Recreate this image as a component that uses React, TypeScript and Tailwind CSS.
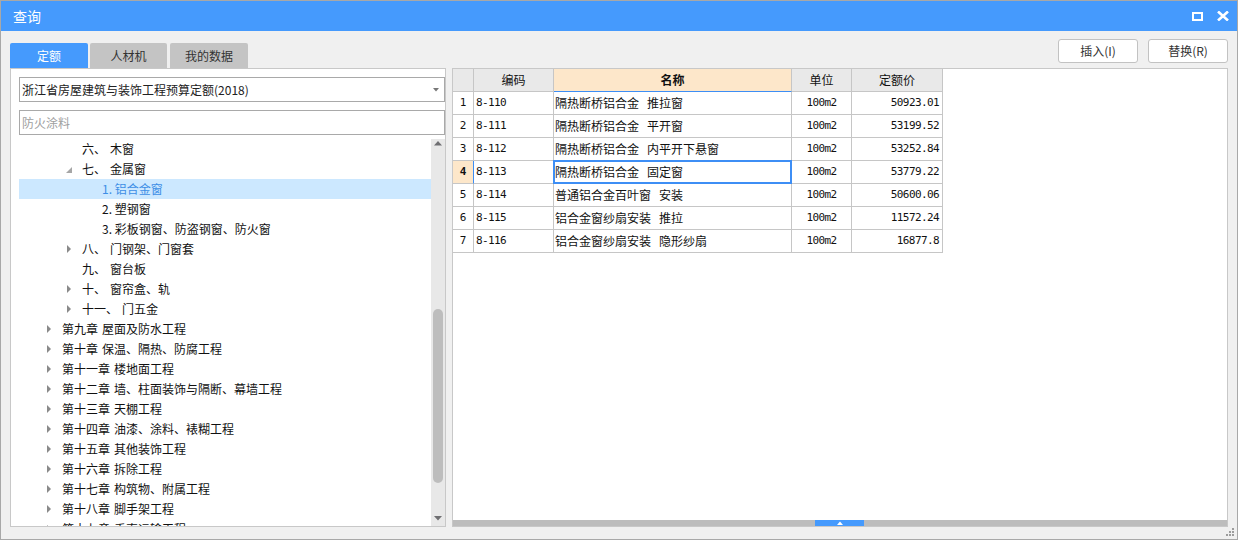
import React from "react";

const CJK = { fontFamily: '"Noto Sans CJK SC", "Noto Sans", sans-serif' };
const MONO = { fontFamily: '"DejaVu Sans Mono", "Liberation Mono", monospace' };

type Node = { level: number; arrow?: "open" | "closed"; prefix?: string; label: string; selected?: boolean };

const tree: Node[] = [
  { level: 1, prefix: "六、", label: "木窗" },
  { level: 1, arrow: "open", prefix: "七、", label: "金属窗" },
  { level: 2, label: "1. 铝合金窗", selected: true },
  { level: 2, label: "2. 塑钢窗" },
  { level: 2, label: "3. 彩板钢窗、防盗钢窗、防火窗" },
  { level: 1, arrow: "closed", prefix: "八、", label: "门钢架、门窗套" },
  { level: 1, prefix: "九、", label: "窗台板" },
  { level: 1, arrow: "closed", prefix: "十、", label: "窗帘盒、轨" },
  { level: 1, arrow: "closed", prefix: "十一、", label: "门五金" },
  { level: 0, arrow: "closed", prefix: "第九章", label: "屋面及防水工程" },
  { level: 0, arrow: "closed", prefix: "第十章", label: "保温、隔热、防腐工程" },
  { level: 0, arrow: "closed", prefix: "第十一章", label: "楼地面工程" },
  { level: 0, arrow: "closed", prefix: "第十二章", label: "墙、柱面装饰与隔断、幕墙工程" },
  { level: 0, arrow: "closed", prefix: "第十三章", label: "天棚工程" },
  { level: 0, arrow: "closed", prefix: "第十四章", label: "油漆、涂料、裱糊工程" },
  { level: 0, arrow: "closed", prefix: "第十五章", label: "其他装饰工程" },
  { level: 0, arrow: "closed", prefix: "第十六章", label: "拆除工程" },
  { level: 0, arrow: "closed", prefix: "第十七章", label: "构筑物、附属工程" },
  { level: 0, arrow: "closed", prefix: "第十八章", label: "脚手架工程" },
  { level: 0, arrow: "closed", prefix: "第十九章", label: "垂直运输工程" },
];

const rows = [
  ["8-110", "隔热断桥铝合金", "推拉窗", "50923.01"],
  ["8-111", "隔热断桥铝合金", "平开窗", "53199.52"],
  ["8-112", "隔热断桥铝合金", "内平开下悬窗", "53252.84"],
  ["8-113", "隔热断桥铝合金", "固定窗", "53779.22"],
  ["8-114", "普通铝合金百叶窗", "安装", "50600.06"],
  ["8-115", "铝合金窗纱扇安装", "推拉", "11572.24"],
  ["8-116", "铝合金窗纱扇安装", "隐形纱扇", "16877.8"],
];

function Arrow({ kind }: { kind?: "open" | "closed" }) {
  return (
    <div className="w-[16px] h-[20px] flex items-center shrink-0">
      {kind === "closed" && (
        <svg width="5" height="8" viewBox="0 0 5 8" className="ml-[1px]">
          <polygon points="0,0 4,4 0,8" fill="#8a8a8a" />
        </svg>
      )}
      {kind === "open" && (
        <svg width="7" height="7" viewBox="0 0 7 7" className="mt-[3px]">
          <polygon points="6,0 6,6 0,6" fill="#a6a6a6" />
        </svg>
      )}
    </div>
  );
}

function TreeRow({ n }: { n: Node }) {
  const pad = n.level === 0 ? "pl-[27px]" : n.level === 1 ? "pl-[47px]" : "pl-[67px]";
  return (
    <div
      className={`h-[20px] flex items-center shrink-0 whitespace-nowrap text-[12px] leading-[20px] ${pad} ${
        n.selected ? "bg-[#cce8ff] text-[#3d8ee6]" : "text-[#111]"
      }`}
    >
      <Arrow kind={n.arrow} />
      {n.prefix && <span>{n.prefix}</span>}
      <span className={n.prefix ? "ml-[4px]" : ""}>{n.label}</span>
    </div>
  );
}

export default function App() {
  return (
    <div
      className="w-[1238px] h-[540px] border border-[#a8a8a8] bg-[#f0f0f0] flex flex-col relative overflow-hidden"
      style={CJK}
    >
      {/* title bar */}
      <div className="h-[30px] bg-[#459afd] flex items-center justify-between pl-[12px] pr-[8px] shrink-0">
        <span className="text-white text-[14px] leading-[20px]">查询</span>
        <div className="flex items-center gap-[14px]">
          <svg width="11" height="9" viewBox="0 0 11 9">
            <rect x="1" y="1" width="9" height="7" fill="none" stroke="#fff" strokeWidth="2" />
          </svg>
          <svg width="12" height="10" viewBox="0 0 12 10">
            <path d="M1 0.5 L11 9.5 M11 0.5 L1 9.5" stroke="#fff" strokeWidth="2.6" />
          </svg>
        </div>
      </div>

      {/* body */}
      <div className="flex-1 grid grid-cols-[436px_1fr] grid-rows-[29px_1fr] gap-x-[6px] pl-[9px] pr-[9px] pt-[8px] pb-[12px] min-h-0">
        {/* tabs */}
        <div className="flex items-end text-[12px]">
          <div className="w-[78px] h-[25px] rounded-t-[2px] bg-[#459afd] text-white flex items-center justify-center">
            定额
          </div>
          <div className="w-[77px] h-[25px] ml-[2px] rounded-t-[2px] bg-[#c4c4c4] text-[#333] flex items-center justify-center">
            人材机
          </div>
          <div className="w-[78px] h-[25px] ml-[3px] rounded-t-[2px] bg-[#c4c4c4] text-[#333] flex items-center justify-center">
            我的数据
          </div>
        </div>

        {/* buttons */}
        <div className="flex justify-end items-start gap-[10px] text-[12px] text-[#333]">
          <button className="w-[80px] h-[24px] bg-white border border-[#c2c2c2] rounded-[3px] flex items-center justify-center">
            插入(I)
          </button>
          <button className="w-[80px] h-[24px] bg-white border border-[#c2c2c2] rounded-[3px] flex items-center justify-center">
            替换(R)
          </button>
        </div>

        {/* left panel */}
        <div className="border border-[#c8c8c8] bg-white flex flex-col min-h-0">
          <div className="ml-[8px] mt-[8px] h-[25px] border border-[#a9a9a9] flex items-center justify-between pl-[2px] pr-[5px] text-[12px] text-[#222] shrink-0">
            <span>浙江省房屋建筑与装饰工程预算定额(2018)</span>
            <svg width="6" height="4" viewBox="0 0 6 4">
              <polygon points="0,0 6,0 3,3.5" fill="#777" />
            </svg>
          </div>
          <div className="ml-[8px] mt-[8px] h-[25px] border border-[#a9a9a9] flex items-center pl-[2px] text-[12px] text-[#a0a0a0] shrink-0">
            防火涂料
          </div>
          <div className="mt-[4px] flex-1 flex pl-[8px] min-h-0">
            <div className="flex-1 flex flex-col overflow-hidden">
              {tree.map((n, i) => (
                <TreeRow key={i} n={n} />
              ))}
            </div>
            <div className="w-[14px] bg-[#e8e8e8] relative shrink-0">
              <svg width="8" height="5" viewBox="0 0 8 5" className="absolute left-[3px] top-[2px]">
                <polygon points="0,4.5 8,4.5 4,0" fill="#6f6f72" />
              </svg>
              <div className="absolute left-[2px] w-[10px] top-[170px] h-[174px] rounded-[5px] bg-[#bdbdbd]" />
              <svg width="8" height="5" viewBox="0 0 8 5" className="absolute left-[3px] bottom-[5px]">
                <polygon points="0,0 8,0 4,4.5" fill="#6f6f72" />
              </svg>
            </div>
          </div>
        </div>

        {/* right panel */}
        <div className="border border-[#c8c8c8] bg-white flex flex-col min-h-0">
          <div className="grid grid-cols-[21px_80px_238px_60px_91px] auto-rows-[23px] w-max text-[12px] text-[#111]">
            <div className="bg-[#e9e9e9] border-r border-b border-[#c6c6c6]" />
            <div className="bg-[#e9e9e9] border-r border-b border-[#c6c6c6] flex items-center justify-center">编码</div>
            <div className="bg-[#fde7ca] border-r border-b border-[#c6c6c6] border-b-[#3d8ef5] flex items-center justify-center font-bold">
              名称
            </div>
            <div className="bg-[#e9e9e9] border-r border-b border-[#c6c6c6] flex items-center justify-center">单位</div>
            <div className="bg-[#e9e9e9] border-r border-b border-[#c6c6c6] flex items-center justify-center">定额价</div>
            {rows.map((r, i) => {
              const sel = i === 3;
              return (
                <React.Fragment key={i}>
                  <div
                    className={`border-r border-b border-[#c6c6c6] flex items-center justify-center text-[11px] ${
                      sel ? "bg-[#fde7ca] font-bold border-r-[#3d8ef5]" : ""
                    }`}
                    style={MONO}
                  >
                    {i + 1}
                  </div>
                  <div
                    className="border-r border-b border-[#c6c6c6] flex items-center pl-[2px] text-[11px] tracking-[-0.6px]"
                    style={MONO}
                  >
                    {r[0]}
                  </div>
                  <div className="border-r border-b border-[#c6c6c6] flex items-center pl-[1px] relative whitespace-nowrap">
                    <span>{r[1]}</span>
                    <span className="ml-[8px]">{r[2]}</span>
                    {sel && (
                      <div className="absolute -top-px -left-px right-[-1px] bottom-[-1px] border-2 border-[#3d8ef5]" />
                    )}
                  </div>
                  <div
                    className="border-r border-b border-[#c6c6c6] flex items-center justify-center text-[11px] tracking-[-0.6px]"
                    style={MONO}
                  >
                    100m2
                  </div>
                  <div
                    className="border-r border-b border-[#c6c6c6] flex items-center justify-end pr-[3px] text-[11px] tracking-[-0.6px]"
                    style={MONO}
                  >
                    {r[3]}
                  </div>
                </React.Fragment>
              );
            })}
          </div>
          <div className="mt-auto h-[6px] bg-[#bdbdbd] flex shrink-0">
            <div className="ml-[362px] w-[49px] h-full bg-[#459afd] flex items-center justify-center">
              <svg width="6" height="4" viewBox="0 0 6 4">
                <polygon points="0,4 6,4 3,0.5" fill="#fff" />
              </svg>
            </div>
          </div>
        </div>
      </div>

      {/* resize grip */}
      <div className="absolute right-[3px] bottom-[3px] grid grid-cols-[2px_2px_2px] grid-rows-[2px_2px_2px] gap-[1px]">
        <div />
        <div />
        <div className="bg-[#9c9c9c]" />
        <div />
        <div className="bg-[#9c9c9c]" />
        <div className="bg-[#9c9c9c]" />
        <div className="bg-[#9c9c9c]" />
        <div className="bg-[#9c9c9c]" />
        <div className="bg-[#9c9c9c]" />
      </div>
    </div>
  );
}
